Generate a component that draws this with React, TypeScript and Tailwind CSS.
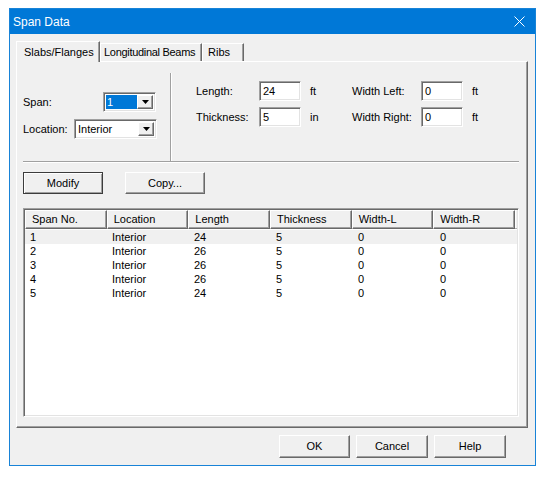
import React from 'react';

const rows = [
    ['1', 'Interior', '24', '5', '0', '0'],
    ['2', 'Interior', '26', '5', '0', '0'],
    ['3', 'Interior', '26', '5', '0', '0'],
    ['4', 'Interior', '26', '5', '0', '0'],
    ['5', 'Interior', '24', '5', '0', '0'],
];

const columns = ['Span No.', 'Location', 'Length', 'Thickness', 'Width-L', 'Width-R'];

function Sunken({ className, children }: { className: string; children?: React.ReactNode }) {
    return (
        <div
            className={`border border-t-[#a0a0a0] border-l-[#a0a0a0] border-b-white border-r-white shadow-[inset_1px_1px_0_#696969,inset_-1px_-1px_0_#e3e3e3] ${className}`}
        >
            {children}
        </div>
    );
}

function Combo({ width, value, selected }: { width: string; value: string; selected?: boolean }) {
    return (
        <Sunken className={`${width} h-[20px] bg-white flex items-center p-[2px]`}>
            <div className="flex-1 h-full flex items-center">
                <span
                    className={
                        selected
                            ? 'bg-[#0078d7] text-white w-full h-full pl-[1px] flex items-center'
                            : 'pl-[1px]'
                    }
                >
                    {value}
                </span>
            </div>
            <div className="w-[16px] h-full bg-[#f0f0f0] border border-t-white border-l-white border-r-[#696969] border-b-[#696969] shadow-[inset_-1px_-1px_0_#a0a0a0] flex items-center justify-center">
                <svg width="7" height="4" viewBox="0 0 7 4">
                    <path d="M0 0h7L3.5 4z" fill="#000" />
                </svg>
            </div>
        </Sunken>
    );
}

function TextBox({ value }: { value: string }) {
    return (
        <Sunken className="w-[42px] h-[20px] bg-white flex items-center pl-[3px]">
            {value}
        </Sunken>
    );
}

function Button({ label, width, isDefault }: { label: string; width: string; isDefault?: boolean }) {
    return (
        <button
            type="button"
            className={`${width} flex items-center justify-center bg-[#f0f0f0] border ${
                isDefault
                    ? 'border-[#3c3c3c] shadow-[inset_1px_1px_0_#fff,inset_-1px_-1px_0_#a0a0a0]'
                    : 'border-t-white border-l-white border-r-[#696969] border-b-[#696969] shadow-[inset_-1px_-1px_0_#a0a0a0]'
            }`}
        >
            {label}
        </button>
    );
}

export default function App() {
    return (
        <div className="w-[546px] h-[477px] bg-white pt-[8px] pl-[9px] text-[11px] text-black font-['Liberation_Sans',Arial,sans-serif]">
            <div className="w-[527px] h-[458px] border border-[#1883d7] bg-[#f0f0f0] flex flex-col">
                {/* Title bar */}
                <div className="h-[25px] bg-[#0078d7] flex items-center justify-between pl-[3px] pr-[10px] text-white text-[12px]">
                    <span>Span Data</span>
                    <svg width="11" height="11" viewBox="0 0 11 11">
                        <path d="M0.5 0.5l10 10M10.5 0.5l-10 10" stroke="#fff" strokeWidth="1" />
                    </svg>
                </div>

                <div className="pt-[7px] pl-[6px] pr-[7px] flex flex-col">
                    {/* Tabs */}
                    <div className="h-[20px] flex items-end relative z-10">
                        <div className="w-[84px] h-[21px] -mb-[1px] pl-[7px] bg-[#f0f0f0] border border-b-0 border-t-white border-l-white border-r-[#696969] shadow-[inset_-1px_0_0_#a0a0a0] flex items-center whitespace-nowrap">
                            Slabs/Flanges
                        </div>
                        <div className="w-[102px] h-[18px] pl-[3px] tracking-[-0.3px] border border-b-0 border-t-white border-l-white border-r-[#696969] shadow-[inset_-1px_0_0_#a0a0a0] flex items-center whitespace-nowrap">
                            Longitudinal Beams
                        </div>
                        <div className="w-[42px] h-[18px] pl-[5px] border border-b-0 border-t-white border-l-white border-r-[#696969] shadow-[inset_-1px_0_0_#a0a0a0] flex items-center">
                            Ribs
                        </div>
                    </div>

                    {/* Tab panel */}
                    <div className="h-[367px] border border-t-white border-l-white border-r-[#696969] border-b-[#696969] shadow-[inset_-1px_-1px_0_#a0a0a0] flex flex-col">
                        <div className="h-[99px] flex">
                            <div className="w-[153px] pl-[6px] pt-[30px] flex flex-col gap-[7px]">
                                <div className="flex items-center">
                                    <span className="w-[80px]">Span:</span>
                                    <Combo width="w-[53px]" value="1" selected />
                                </div>
                                <div className="flex items-center">
                                    <span className="w-[51px]">Location:</span>
                                    <Combo width="w-[83px]" value="Interior" />
                                </div>
                            </div>
                            <div className="mt-[11px] w-[2px] border-l border-l-[#a0a0a0] border-r border-r-white" />
                            <div className="pl-[24px] pt-[19px] flex flex-col gap-[6px]">
                                <div className="flex items-center">
                                    <span className="w-[63px]">Length:</span>
                                    <TextBox value="24" />
                                    <span className="ml-[9px] w-[42px]">ft</span>
                                    <span className="w-[69px]">Width Left:</span>
                                    <TextBox value="0" />
                                    <span className="ml-[9px]">ft</span>
                                </div>
                                <div className="flex items-center">
                                    <span className="w-[63px]">Thickness:</span>
                                    <TextBox value="5" />
                                    <span className="ml-[9px] w-[42px]">in</span>
                                    <span className="w-[69px]">Width Right:</span>
                                    <TextBox value="0" />
                                    <span className="ml-[9px]">ft</span>
                                </div>
                            </div>
                        </div>
                        <div className="ml-[6px] w-[496px] h-[2px] border-t border-t-[#a0a0a0] border-b border-b-white" />

                        {/* Modify / Copy */}
                        <div className="ml-[6px] mt-[9px] h-[22px] flex gap-[22px]">
                            <Button label="Modify" width="w-[80px]" isDefault />
                            <Button label="Copy..." width="w-[80px]" />
                        </div>

                        {/* List view */}
                        <Sunken className="ml-[6px] mt-[14px] w-[496px] h-[209px] bg-white p-[1px] flex flex-col">
                            <div className="h-[19px] flex bg-[#f0f0f0]">
                                {columns.map((c) => (
                                    <div
                                        key={c}
                                        className="w-[82px] h-full pl-[6px] flex items-center border border-t-white border-l-white border-r-[#696969] border-b-[#696969] shadow-[inset_-1px_-1px_0_#a0a0a0]"
                                    >
                                        {c}
                                    </div>
                                ))}
                                <div className="flex-1 border border-t-white border-l-white border-r-[#f0f0f0] border-b-[#696969] shadow-[inset_0_-1px_0_#a0a0a0]" />
                            </div>
                            <div className="pt-[1px] flex flex-col">
                                {rows.map((r, i) => (
                                    <div key={i} className={`h-[14px] flex items-center ${i === 0 ? 'bg-[#f0f0f0]' : ''}`}>
                                        {r.map((v, j) => (
                                            <span key={j} className="w-[82px] pl-[5px]">
                                                {v}
                                            </span>
                                        ))}
                                    </div>
                                ))}
                            </div>
                        </Sunken>
                    </div>

                    {/* Dialog buttons */}
                    <div className="mt-[7px] h-[23px] flex justify-end gap-[6px] pr-[22px]">
                        <Button label="OK" width="w-[71px]" />
                        <Button label="Cancel" width="w-[72px]" />
                        <Button label="Help" width="w-[72px]" />
                    </div>
                </div>
            </div>
        </div>
    );
}
